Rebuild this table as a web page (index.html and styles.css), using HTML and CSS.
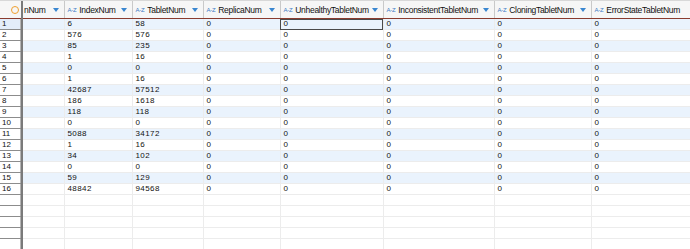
FILE: index.html
```html
<!DOCTYPE html>
<html lang="en">
<head>
    <meta charset="UTF-8">
    <title>Tablet stats</title>
    <link rel="stylesheet" href="styles.css">
</head>
<body>
    <div class="grid-wrap">
        <table class="grid">
            <colgroup>
                <col class="c-row">
                <col class="c-db">
                <col class="c-index">
                <col class="c-tablet">
                <col class="c-replica">
                <col class="c-unhealthy">
                <col class="c-incons">
                <col class="c-cloning">
                <col class="c-error">
            </colgroup>
            <thead>
                <tr>
                    <th class="corner"><span class="corner-dot"></span></th>
                    <th><div class="hd cut"><span class="hd-name">nNum</span><span class="arrow"></span></div></th>
                    <th><div class="hd"><span class="az">A-Z</span><span class="hd-name">IndexNum</span><span class="arrow"></span></div></th>
                    <th><div class="hd"><span class="az">A-Z</span><span class="hd-name">TabletNum</span><span class="arrow"></span></div></th>
                    <th><div class="hd"><span class="az">A-Z</span><span class="hd-name">ReplicaNum</span><span class="arrow"></span></div></th>
                    <th><div class="hd"><span class="az">A-Z</span><span class="hd-name">UnhealthyTabletNum</span><span class="arrow"></span></div></th>
                    <th><div class="hd"><span class="az">A-Z</span><span class="hd-name">InconsistentTabletNum</span><span class="arrow"></span></div></th>
                    <th><div class="hd"><span class="az">A-Z</span><span class="hd-name">CloningTabletNum</span><span class="arrow"></span></div></th>
                    <th><div class="hd"><span class="az">A-Z</span><span class="hd-name">ErrorStateTabletNum</span><span class="arrow"></span></div></th>
                </tr>
            </thead>
            <tbody>
                <tr class="active"><td class="rn">1</td><td></td><td>6</td><td>58</td><td>0</td><td class="sel">0</td><td>0</td><td>0</td><td>0</td></tr>
                <tr><td class="rn">2</td><td></td><td>576</td><td>576</td><td>0</td><td>0</td><td>0</td><td>0</td><td>0</td></tr>
                <tr><td class="rn">3</td><td></td><td>85</td><td>235</td><td>0</td><td>0</td><td>0</td><td>0</td><td>0</td></tr>
                <tr><td class="rn">4</td><td></td><td>1</td><td>16</td><td>0</td><td>0</td><td>0</td><td>0</td><td>0</td></tr>
                <tr><td class="rn">5</td><td></td><td>0</td><td>0</td><td>0</td><td>0</td><td>0</td><td>0</td><td>0</td></tr>
                <tr><td class="rn">6</td><td></td><td>1</td><td>16</td><td>0</td><td>0</td><td>0</td><td>0</td><td>0</td></tr>
                <tr><td class="rn">7</td><td></td><td>42687</td><td>57512</td><td>0</td><td>0</td><td>0</td><td>0</td><td>0</td></tr>
                <tr><td class="rn">8</td><td></td><td>186</td><td>1618</td><td>0</td><td>0</td><td>0</td><td>0</td><td>0</td></tr>
                <tr><td class="rn">9</td><td></td><td>118</td><td>118</td><td>0</td><td>0</td><td>0</td><td>0</td><td>0</td></tr>
                <tr><td class="rn">10</td><td></td><td>0</td><td>0</td><td>0</td><td>0</td><td>0</td><td>0</td><td>0</td></tr>
                <tr><td class="rn">11</td><td></td><td>5088</td><td>34172</td><td>0</td><td>0</td><td>0</td><td>0</td><td>0</td></tr>
                <tr><td class="rn">12</td><td></td><td>1</td><td>16</td><td>0</td><td>0</td><td>0</td><td>0</td><td>0</td></tr>
                <tr><td class="rn">13</td><td></td><td>34</td><td>102</td><td>0</td><td>0</td><td>0</td><td>0</td><td>0</td></tr>
                <tr><td class="rn">14</td><td></td><td>0</td><td>0</td><td>0</td><td>0</td><td>0</td><td>0</td><td>0</td></tr>
                <tr><td class="rn">15</td><td></td><td>59</td><td>129</td><td>0</td><td>0</td><td>0</td><td>0</td><td>0</td></tr>
                <tr><td class="rn">16</td><td></td><td>48842</td><td>94568</td><td>0</td><td>0</td><td>0</td><td>0</td><td>0</td></tr>
                <tr class="empty"><td class="rn"></td><td></td><td></td><td></td><td></td><td></td><td></td><td></td><td></td></tr>
                <tr class="empty"><td class="rn"></td><td></td><td></td><td></td><td></td><td></td><td></td><td></td><td></td></tr>
                <tr class="empty"><td class="rn"></td><td></td><td></td><td></td><td></td><td></td><td></td><td></td><td></td></tr>
                <tr class="empty"><td class="rn"></td><td></td><td></td><td></td><td></td><td></td><td></td><td></td><td></td></tr>
                <tr class="empty"><td class="rn"></td><td></td><td></td><td></td><td></td><td></td><td></td><td></td><td></td></tr>
                <tr class="empty"><td class="rn"></td><td></td><td></td><td></td><td></td><td></td><td></td><td></td><td></td></tr>
            </tbody>
        </table>
    </div>
</body>
</html>
```

FILE: styles.css
```css
/* Generel styling */
body {
    margin: 0;
    background: #fff;
    font-family: "Liberation Sans", Arial, sans-serif;
    color: #111;
    overflow: hidden;
}

.grid-wrap {
    width: 690px;
    height: 249px;
    overflow: hidden;
    border-top: 1px solid #d8d8d8;
}

/* Tabel */
.grid {
    border-collapse: collapse;
    table-layout: fixed;
    width: 712px;
    font-size: 8px;
}

.c-row { width: 22px; }
.c-db { width: 42px; }
.c-index { width: 68px; }
.c-tablet { width: 71px; }
.c-replica { width: 77px; }
.c-unhealthy { width: 103px; }
.c-incons { width: 111px; }
.c-cloning { width: 97px; }
.c-error { width: 121px; }

/* Header */
.grid th {
    height: 17px;
    padding: 0;
    background: #f6f6f6;
    border-right: 1px solid #c9c9c9;
    border-bottom: 1px solid #8a3b2e;
    font-weight: normal;
    text-align: left;
    white-space: nowrap;
    overflow: hidden;
}

.grid th.corner {
    border-right: 2px solid #7a7a7a;
}

.corner-dot {
    display: block;
    width: 6px;
    height: 6px;
    margin: 0 0 0 11px;
    border: 1px solid #f0a030;
    border-radius: 50%;
}

.hd {
    display: flex;
    align-items: center;
    padding: 0 5px 0 3px;
    color: #111;
}

.hd.cut .hd-name {
    margin-left: -2px;
}

.az {
    font-size: 6px;
    color: #3a78c4;
    margin-right: 3px;
    letter-spacing: -0.3px;
}

.hd-name {
    flex: 1;
    font-size: 8.5px;
    letter-spacing: -0.3px;
    overflow: hidden;
}

/* Pil i header */
.arrow {
    width: 0;
    height: 0;
    border-left: 3px solid transparent;
    border-right: 3px solid transparent;
    border-top: 4px solid #3a86d0;
}

/* Rækker */
.grid td {
    height: 10px;
    padding: 0 0 0 3px;
    border-right: 1px solid #ececec;
    border-bottom: 1px solid #ececec;
    line-height: 10px;
    letter-spacing: 0.4px;
    white-space: nowrap;
    overflow: hidden;
}

.grid tbody tr:nth-child(odd) td {
    background: #eaf3fd;
}

.grid tbody tr.empty td {
    background: #fff;
}

/* Rækkenumre */
.grid td.rn {
    background: #fff;
    border-right: 2px solid #7a7a7a;
    border-bottom: 1px solid #8c8c8c;
    box-shadow: inset -1px 0 0 #b5b5b5;
    padding-left: 2px;
    letter-spacing: 0;
}

.grid tbody tr:nth-child(odd) td.rn {
    background: #fff;
}

.grid tbody tr.active td.rn {
    background: #e3edfa;
}

/* Valgt celle */
.grid td.sel {
    outline: 1px solid #4a4a4a;
    outline-offset: -1px;
}
```
